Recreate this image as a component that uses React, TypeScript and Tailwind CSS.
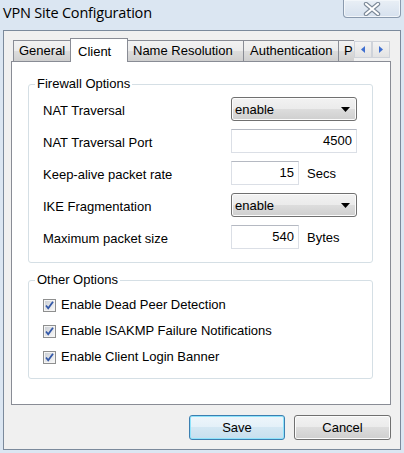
import React from "react";

const font = { fontFamily: '"Liberation Sans", Arial, sans-serif' };

function Dropdown({ value }: { value: string }) {
  return (
    <div className="flex h-[24px] w-[126px] items-center justify-between rounded-[3px] border border-[#707070] bg-[linear-gradient(#f2f2f2,#ebebeb_50%,#dddddd_50%,#cfcfcf)] pl-[3px] pr-[6px] shadow-[inset_0_0_0_1px_#fcfcfc] text-[13px] text-black">
      <span className="pt-[1px]">{value}</span>
      <svg width="9" height="5" viewBox="0 0 9 5">
        <path d="M0 0 H9 L4.5 5 Z" fill="#000" />
      </svg>
    </div>
  );
}

function NumInput({ value, w }: { value: string; w: string }) {
  return (
    <div
      className={`flex h-[24px] ${w} items-center justify-end border border-[#dbdfe6] border-t-[#b5b9c2] bg-white pr-[4px] text-[13px] text-black`}
    >
      {value}
    </div>
  );
}

function Check({ label }: { label: string }) {
  return (
    <div className="flex h-[26px] items-center gap-[5px]">
      <svg width="13" height="13" viewBox="0 0 13 13">
        <defs>
          <linearGradient id="cg" x1="0" y1="0" x2="1" y2="1">
            <stop offset="0" stopColor="#cbcfd5" />
            <stop offset="1" stopColor="#f7f7f7" />
          </linearGradient>
        </defs>
        <rect x="0.5" y="0.5" width="12" height="12" fill="#f4f4f4" stroke="#8e8f8f" />
        <rect x="2" y="2" width="9" height="9" fill="url(#cg)" />
        <path d="M3 6.5 L5.2 9.2 L10 2.8" fill="none" stroke="#3358a8" strokeWidth="1.8" />
      </svg>
      <span className="text-[13px] text-black">{label}</span>
    </div>
  );
}

function Row({ label, children }: { label: string; children: React.ReactNode }) {
  return (
    <div className="flex h-[24px] items-center">
      <span className="w-[188px] pt-[3px] text-[13px] text-black">{label}</span>
      {children}
    </div>
  );
}

function Group({ title, children, h, pt }: { title: string; children: React.ReactNode; h: string; pt: string }) {
  return (
    <div className={`relative ${h} w-[345px] rounded-[3px] border border-[#d5dfe5] ${pt} pl-[14px]`}>
      <span className="absolute left-[6px] top-[-9px] bg-white px-[2px] text-[13px] leading-[16px] text-black">
        {title}
      </span>
      {children}
    </div>
  );
}

function Arrow({ dir }: { dir: "l" | "r" }) {
  return (
    <div className="flex h-[17px] w-[18px] items-center justify-center border border-[#cfd3da] bg-[linear-gradient(#f3f3f3,#e3e3e3)]">
      <svg width="4" height="7" viewBox="0 0 4 7">
        {dir === "l" ? <path d="M4 0 V7 L0 3.5 Z" fill="#3f6fd0" /> : <path d="M0 0 V7 L4 3.5 Z" fill="#3f6fd0" />}
      </svg>
    </div>
  );
}

export default function App() {
  const tabBase =
    "flex h-[21px] items-center border-l border-t border-[#898c95] bg-[linear-gradient(#f2f2f2,#ebebeb_50%,#dddddd_50%,#cfcfcf)] text-[13px] text-black";
  return (
    <div className="flex h-[453px] w-[404px] flex-col bg-[#dbe6f2]" style={font}>
      {/* title bar */}
      <div className="flex h-[30px] items-start">
        <span
          className="pl-[3px] pt-[3px] text-[14.5px] leading-[20px] text-black"
          style={{ fontFamily: '"Open Sans", "Noto Sans", sans-serif', letterSpacing: "-0.2px" }}
        >
          VPN Site Configuration
        </span>
        <div className="ml-auto mr-[3px] flex h-[18px] w-[58px] items-center justify-center rounded-b-[4px] border border-t-0 border-[#8a9aae] bg-[linear-gradient(#e9eff6,#d6e1ee)] shadow-[inset_0_0_0_1px_#f2f6fa]">
          <svg width="18" height="14" viewBox="0 0 18 14">
            <path d="M3 2 L15 12 M15 2 L3 12" stroke="#7d8a99" strokeWidth="4.4" strokeLinecap="round" fill="none" />
            <path d="M3 2 L15 12 M15 2 L3 12" stroke="#ffffff" strokeWidth="2.2" strokeLinecap="round" fill="none" />
          </svg>
        </div>
      </div>

      {/* client area */}
      <div className="mx-[3px] flex h-[420px] flex-col border border-[#7b8a9c] bg-[#f0f0f0] pl-[7px] pt-[7px]">
        {/* tabs */}
        <div className="relative z-10 flex h-[23px] w-[380px] items-end pl-[2px]">
          <div className={`${tabBase} mr-[-1px] w-[58px] pl-[5px]`}>General</div>
          <div className="mb-[-1px] flex h-[24px] w-[58px] items-start border-x border-t border-[#898c95] bg-white pl-[7px] pt-[3px] text-[13px] text-black">
            Client
          </div>
          <div className={`${tabBase} ml-[-1px] w-[116px] pl-[5px]`}>Name Resolution</div>
          <div className={`${tabBase} w-[95px] pl-[6px]`}>Authentication</div>
          <div className={`${tabBase} w-[16px] overflow-hidden pl-[5px]`}>P</div>
          <div className="mb-[3px] flex">
            <Arrow dir="l" />
            <Arrow dir="r" />
          </div>
        </div>

        {/* panel */}
        <div className="flex h-[344px] w-[380px] flex-col border border-[#898c95] bg-white pl-[16px] pt-[22px]">
          <Group title="Firewall Options" h="h-[179px]" pt="pt-[12px]">
            <div className="flex flex-col gap-[8px]">
              <Row label="NAT Traversal">
                <Dropdown value="enable" />
              </Row>
              <Row label="NAT Traversal Port">
                <NumInput value="4500" w="w-[126px]" />
              </Row>
              <Row label="Keep-alive packet rate">
                <NumInput value="15" w="w-[68px]" />
                <span className="ml-[8px] pt-[2px] text-[13px] text-black">Secs</span>
              </Row>
              <Row label="IKE Fragmentation">
                <Dropdown value="enable" />
              </Row>
              <Row label="Maximum packet size">
                <NumInput value="540" w="w-[68px]" />
                <span className="ml-[8px] pt-[2px] text-[13px] text-black">Bytes</span>
              </Row>
            </div>
          </Group>
          <div className="h-[17px]" />
          <Group title="Other Options" h="h-[99px]" pt="pt-[11px]">
            <Check label="Enable Dead Peer Detection" />
            <Check label="Enable ISAKMP Failure Notifications" />
            <Check label="Enable Client Login Banner" />
          </Group>
        </div>

        {/* buttons */}
        <div className="mt-[10px] flex w-[380px] justify-end gap-[9px]">
          <button className="flex h-[25px] w-[96px] items-center justify-center rounded-[3px] border border-[#3c7fb1] bg-[linear-gradient(#eef6fb,#e3f0f8_50%,#d3e7f3_50%,#c7dfee)] text-[13px] text-black shadow-[inset_0_0_0_1px_#8fe3fb]">
            Save
          </button>
          <button className="flex h-[25px] w-[97px] items-center justify-center rounded-[3px] border border-[#707070] bg-[linear-gradient(#f2f2f2,#ebebeb_50%,#dddddd_50%,#cfcfcf)] text-[13px] text-black shadow-[inset_0_0_0_1px_#fcfcfc]">
            Cancel
          </button>
        </div>
      </div>
    </div>
  );
}
